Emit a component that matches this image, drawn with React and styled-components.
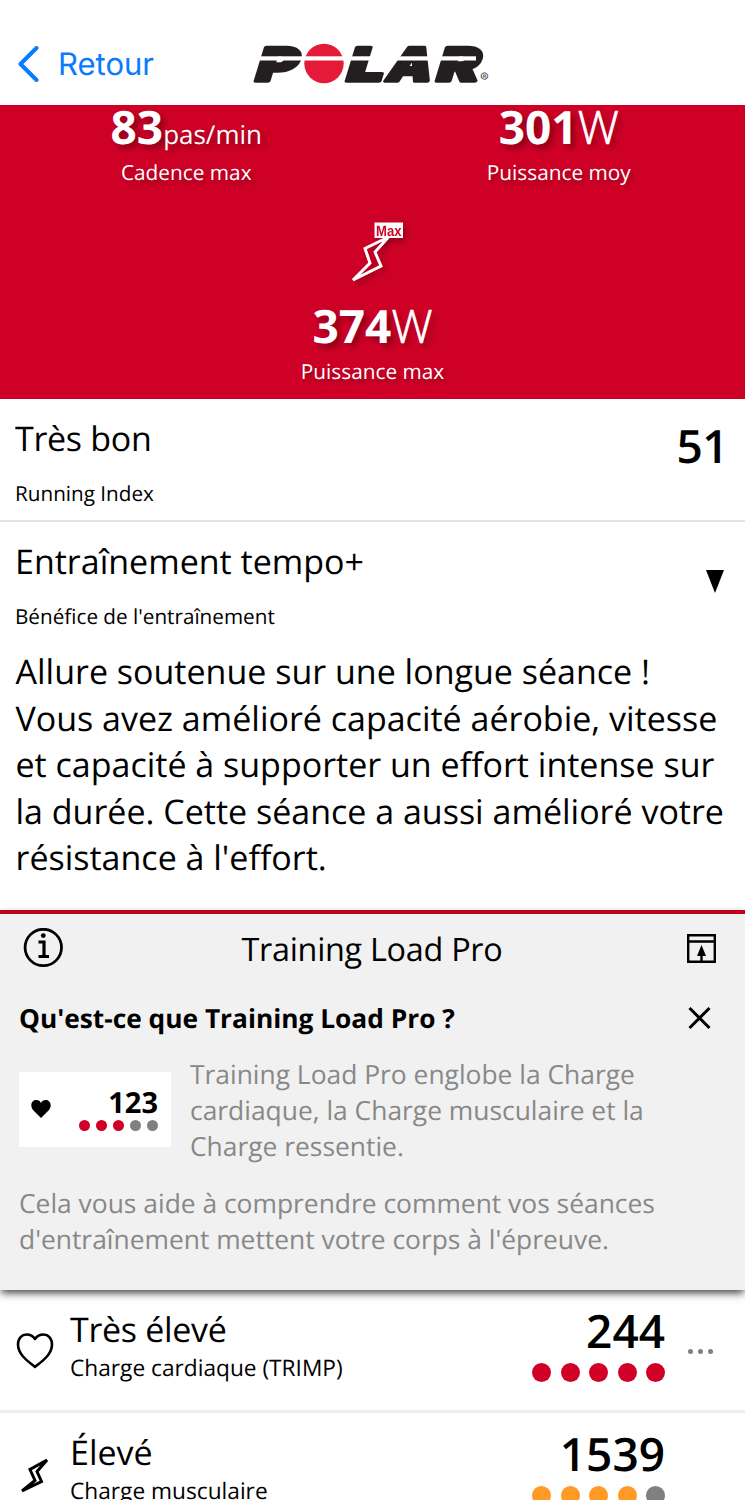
import React from "react";
import styled, { createGlobalStyle } from "styled-components";

const GlobalStyle = createGlobalStyle`
    * { box-sizing: border-box; }
    body {
        margin: 0;
        background: #fff;
        color: #000;
        font-family: "Open Sans", "Noto Sans", sans-serif;
        text-rendering: geometricPrecision;
    }
    svg { display: block; flex: none; }
`;

const Screen = styled.div`
    width: 745px;
    height: 1500px;
    overflow: hidden;
`;

const Header = styled.header`
    height: 105px;
    padding: 38px 0 0 18px;
    display: flex;
    align-items: flex-start;
`;

const BackButton = styled.a`
    width: 232px;
    height: 52px;
    display: flex;
    align-items: center;
    gap: 19px;
    color: #0a7aff;
    font-family: Inter, sans-serif;
    font-size: 31px;
`;

const Logo = styled.svg`
    margin-top: -3px;
`;

const Stats = styled.section`
    height: 294px;
    background: #cf0026;
    color: #fff;
    display: flex;
    flex-wrap: wrap;
    justify-content: center;
    align-content: flex-start;
`;

const Stat = styled.div`
    width: 50%;
    display: flex;
    flex-direction: column;
    align-items: center;
    height: ${props => props.$tall ? "199px" : "95px"};
    padding-top: ${props => props.$tall ? "21px" : "0"};
`;

const StatValue = styled.div`
    height: 44px;
    font-size: 46px;
    line-height: 44px;
    font-weight: 700;
    white-space: nowrap;
    text-shadow: 4px 4px 6px rgba(0, 0, 0, 0.35);
    margin-top: ${props => props.$tall ? "21px" : "0"};
`;

const Unit = styled.span`
    font-weight: ${props => props.$small ? 400 : 300};
    font-size: ${props => props.$small ? "26px" : "46px"};
    -webkit-text-stroke: ${props => props.$small ? "0" : "0.7px #fff"};
`;

const StatLabel = styled.div`
    font-size: 20.8px;
    line-height: 28px;
    margin-top: 10px;
    text-shadow: 3px 3px 5px rgba(0, 0, 0, 0.3);
`;

const Summary = styled.section`
    height: ${props => props.$height};
    padding: 15px 20px 0 15px;
    display: flex;
    justify-content: space-between;
    border-bottom: ${props => props.$line ? "2px solid #e2e2e2" : "none"};
`;

const Title = styled.h2`
    margin: 0;
    font-size: 34px;
    font-weight: 400;
    line-height: 48px;
    letter-spacing: ${props => props.$tight ? "-0.3px" : "0"};
`;

const Caption = styled.div`
    font-size: 20.7px;
    line-height: 28px;
    margin-top: 18px;
`;

const Score = styled.div`
    font-size: 46px;
    font-weight: 560;
    line-height: 60px;
`;

const IndexScore = styled(Score)`
    margin-right: -3px;
    line-height: 64px;
    letter-spacing: -0.5px;
`;

const Triangle = styled.div`
    width: 0;
    height: 0;
    margin-top: 33px;
    margin-right: 1px;
    border: 9.5px solid transparent;
    border-bottom: 0;
    border-top: 23px solid #000;
`;

const Feedback = styled.p`
    margin: 0;
    padding: 10px 0 0 15.5px;
    height: 272px;
    font-size: 34px;
    line-height: 46.5px;
    white-space: nowrap;
`;

const LoadPanel = styled.section`
    position: relative;
    height: 380px;
    border-top: 4px solid #c0001f;
    background: #f1f1f1;
    box-shadow: 0 4px 8px -1px rgba(0, 0, 0, 0.75);
`;

const PanelHeader = styled.div`
    height: 68px;
    padding: 0 29px 0 23px;
    display: flex;
    align-items: center;
    justify-content: space-between;
`;

const PanelTitle = styled.h3`
    flex: 1;
    margin: 0;
    padding: 1px 6px 0 0;
    text-align: center;
    font-size: 32.4px;
    font-weight: 400;
    line-height: 46px;
    letter-spacing: -0.3px;
`;

const Question = styled.div`
    height: 76px;
    padding: 0 34px 0 19px;
    display: flex;
    justify-content: space-between;
    font-size: 26.3px;
    font-weight: 700;
    line-height: 72px;
`;

const Explanation = styled.div`
    padding: 0 19px;
    display: flex;
    gap: 19px;
    margin-top: -2px;
`;

const Sample = styled.div`
    width: 152px;
    height: 75px;
    margin-top: 16px;
    padding: 14px 13px 0 12px;
    background: #fff;
    display: flex;
    justify-content: space-between;
`;

const Aligned = styled.div`
    display: flex;
    flex-direction: column;
    align-items: flex-end;
`;

const SampleNumber = styled.div`
    font-size: 29px;
    font-weight: 700;
    line-height: 34px;
`;

const PanelText = styled.p`
    margin: ${props => props.$below ? "21px 19px 0" : "0"};
    color: #888;
    font-size: 26.4px;
    line-height: 36px;
    white-space: nowrap;
`;

const Dots = styled.div`
    display: flex;
    gap: ${props => props.$gap};
`;

const Dot = styled.span`
    width: ${props => props.$size};
    height: ${props => props.$size};
    border-radius: 50%;
    background: ${props => props.$color};
`;

const LoadRow = styled.section`
    height: 123px;
    padding-left: 16px;
    display: flex;
    border-bottom: 3px solid #eee;
`;

const RowIcon = styled.div`
    width: 54px;
    padding-top: 42px;
`;

const RowText = styled.div`
    flex: 1;
    padding-top: 15px;
`;

const RowCaption = styled.div`
    font-size: 22.7px;
    line-height: 30px;
`;

const RowValue = styled(Aligned)`
    width: 200px;
    padding-top: 11px;
    gap: 2px;
`;

const RowMenu = styled.div`
    width: 80px;
    padding: 59px 0 0 23px;
`;

const RED = "#d10027";
const ORANGE = "#ff9a27";
const GREY = "#808080";

function PolarLogo() {
    return (
        <Logo width="245" height="60" viewBox="250 35 245 60">
            <g fill="#231f20" stroke="#231f20" strokeWidth="3.4" strokeLinejoin="round" fontFamily="Inter" fontWeight="900" fontSize="46" transform="translate(0 80.5) skewX(-17)">
                <text x="253" y="0" textLength="41" lengthAdjust="spacingAndGlyphs">P</text>
                <text x="344" y="0" textLength="37" lengthAdjust="spacingAndGlyphs">L</text>
                <text x="384" y="0" textLength="45" lengthAdjust="spacingAndGlyphs">A</text>
                <text x="434" y="0" textLength="42" lengthAdjust="spacingAndGlyphs">R</text>
            </g>
            <circle cx="324" cy="63.5" r="19.7" fill="#e51938" />
            <rect x="252" y="56.3" width="50" height="4.2" fill="#fff" />
            <rect x="303" y="56.3" width="173" height="4.2" fill="#fff" />
            <text x="480" y="82" fontFamily="Inter" fontSize="13" fill="#444">®</text>
        </Logo>
    );
}

const BoltIcon = styled.svg`
    filter: drop-shadow(3px 3px 3px rgba(0, 0, 0, 0.3));
`;

function BoltMax() {
    return (
        <BoltIcon width="60" height="62" viewBox="343.5 221 60 62" overflow="visible">
            <path d="M353.5 280 370.5 263 365.5 248.5 389 237 375.5 252 381.5 266Z" fill="none" stroke="#fff" strokeWidth="3" />
            <rect x="375" y="222.5" width="28.5" height="15.5" fill="#fff" />
            <text x="376.5" y="235.5" fontFamily="Liberation Sans" fontWeight="700" fontSize="15" textLength="25.5" lengthAdjust="spacingAndGlyphs" fill={RED}>Max</text>
        </BoltIcon>
    );
}

function DotScale({ colors, size, gap }) {
    return (
        <Dots $gap={gap}>
            {colors.map((color, i) => <Dot key={i} $size={size} $color={color} />)}
        </Dots>
    );
}

export default function App() {
    return (
        <Screen>
            <GlobalStyle />
            <Header>
                <BackButton>
                    <svg width="21" height="36" viewBox="0 0 21 36" fill="none" stroke="#0a7aff" strokeWidth="4" strokeLinecap="round" strokeLinejoin="round">
                        <path d="M18.5 2 2.5 18 18.5 34" />
                    </svg>
                    Retour
                </BackButton>
                <PolarLogo />
            </Header>
            <Stats>
                <Stat>
                    <StatValue>83<Unit $small>pas/min</Unit></StatValue>
                    <StatLabel>Cadence max</StatLabel>
                </Stat>
                <Stat>
                    <StatValue>301<Unit>W</Unit></StatValue>
                    <StatLabel>Puissance moy</StatLabel>
                </Stat>
                <Stat $tall>
                    <BoltMax />
                    <StatValue $tall>374<Unit>W</Unit></StatValue>
                    <StatLabel>Puissance max</StatLabel>
                </Stat>
            </Stats>
            <Summary $height="123px" $line>
                <div>
                    <Title $tight>Très bon</Title>
                    <Caption>Running Index</Caption>
                </div>
                <IndexScore>51</IndexScore>
            </Summary>
            <Summary $height="116px">
                <div>
                    <Title>Entraînement tempo+</Title>
                    <Caption>Bénéfice de l'entraînement</Caption>
                </div>
                <Triangle />
            </Summary>
            <Feedback>
                Allure soutenue sur une longue séance !<br />
                Vous avez amélioré capacité aérobie, vitesse<br />
                et capacité à supporter un effort intense sur<br />
                la durée. Cette séance a aussi amélioré votre<br />
                résistance à l'effort.
            </Feedback>
            <LoadPanel>
                <PanelHeader>
                    <svg width="40" height="40" viewBox="0 0 40 40" fill="none" stroke="#000" strokeWidth="2.8">
                        <circle cx="20.3" cy="19.5" r="18.2" />
                        <path d="M15.5 14H21V28M15.5 28.5H26" strokeWidth="3.2" />
                        <circle cx="20.3" cy="7.6" r="2.4" fill="#000" stroke="none" />
                    </svg>
                    <PanelTitle>Training Load Pro</PanelTitle>
                    <svg width="29" height="29" viewBox="0 0 29 29" fill="none" stroke="#000" strokeWidth="2.4">
                        <path d="M1.2 1.2H27.8V27.8H1.2ZM1 7.5H28M14.5 27V20" />
                        <path d="M14.5 11 19 22H10Z" fill="#000" stroke="none" />
                    </svg>
                </PanelHeader>
                <Question>
                    Qu'est-ce que Training Load Pro ?
                    <svg width="23" height="72" viewBox="0 0 23 72" stroke="#000" strokeWidth="3">
                        <path d="M1.5 26 21.5 46M21.5 26 1.5 46" />
                    </svg>
                </Question>
                <Explanation>
                    <Sample>
                        <svg width="20" height="46" viewBox="0 0 20 46">
                            <path d="M10 32 2 24C-2 18 2 14 5 14 8 14 9 15 10 17 11 15 12 14 15 14 18 14 22 18 18 24Z" />
                        </svg>
                        <Aligned>
                            <SampleNumber>123</SampleNumber>
                            <DotScale colors={[RED, RED, RED, GREY, GREY]} size="11px" gap="6px" />
                        </Aligned>
                    </Sample>
                    <PanelText>
                        Training Load Pro englobe la Charge<br />
                        cardiaque, la Charge musculaire et la<br />
                        Charge ressentie.
                    </PanelText>
                </Explanation>
                <PanelText $below>
                    Cela vous aide à comprendre comment vos séances<br />
                    d'entraînement mettent votre corps à l'épreuve.
                </PanelText>
            </LoadPanel>
            <LoadRow>
                <RowIcon>
                    <svg width="38" height="38" viewBox="0 0 38 38" fill="none" stroke="#000" strokeWidth="2.6" strokeLinejoin="round">
                        <path d="M19 35C13 30 2 23 2 12.5 2 6 6 2.5 10.5 2.5 14.5 2.5 17 4 19 7 21 4 23.5 2.5 27.5 2.5 32 2.5 36 6 36 12.5 36 23 25 30 19 35Z" />
                    </svg>
                </RowIcon>
                <RowText>
                    <Title $tight>Très élevé</Title>
                    <RowCaption>Charge cardiaque (TRIMP)</RowCaption>
                </RowText>
                <RowValue>
                    <Score>244</Score>
                    <DotScale colors={[RED, RED, RED, RED, RED]} size="19px" gap="9.4px" />
                </RowValue>
                <RowMenu>
                    <DotScale colors={[GREY, GREY, GREY]} size="5px" gap="5px" />
                </RowMenu>
            </LoadRow>
            <LoadRow>
                <RowIcon>
                    <svg width="38" height="42" viewBox="16 1454 38 42" fill="none" stroke="#000" strokeWidth="3">
                        <path d="M22 1490 35 1479.5 30 1468.5 47 1459 37 1470.5 41.5 1480.5Z" />
                    </svg>
                </RowIcon>
                <RowText>
                    <Title>Élevé</Title>
                    <RowCaption>Charge musculaire</RowCaption>
                </RowText>
                <RowValue>
                    <Score>1539</Score>
                    <DotScale colors={[ORANGE, ORANGE, ORANGE, ORANGE, GREY]} size="19px" gap="9.4px" />
                </RowValue>
                <RowMenu />
            </LoadRow>
        </Screen>
    );
}
